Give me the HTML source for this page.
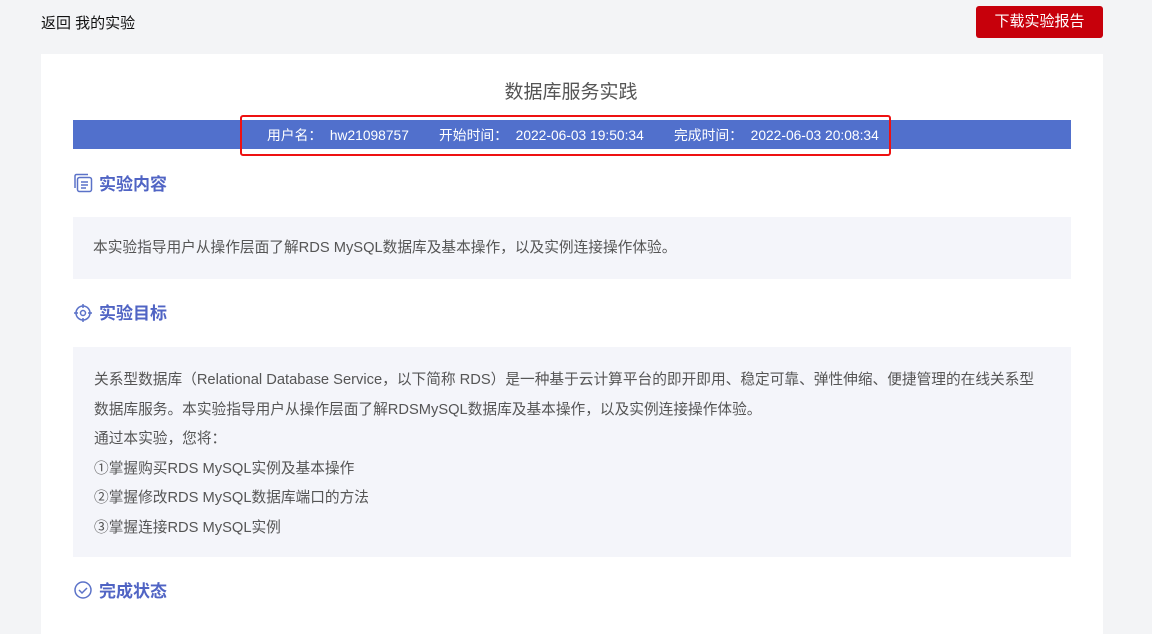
<!DOCTYPE html>
<html><head><meta charset="utf-8"><style>
*{margin:0;padding:0;box-sizing:border-box}
body{width:1152px;height:614px;overflow:hidden;background:#f3f4f6;font-family:"Liberation Sans","Noto Sans CJK SC",sans-serif;color:#333;position:relative}
.abs{position:absolute}
.back{left:41px;top:12px;font-size:15px;color:#111}
.btn{left:976px;top:6px;width:127px;height:32px;background:#c7000b;color:#fff;border-radius:3px;font-size:15px;text-align:center;line-height:32px}
.card{left:41px;top:54px;width:1062px;height:580px;background:#fff}
.title{left:0;width:1142px;top:77px;text-align:center;font-size:19px;color:#555}
.bar{left:73px;top:120px;width:998px;height:29px;background:#5170cc}
.red{left:240px;top:115px;width:651px;height:41px;border:2px solid #ee1111;border-radius:3px}
.info{top:124px;font-size:13.8px;color:#fff}
.h{left:99px;font-size:17px;font-weight:bold;color:#5064c4}
.box{left:73px;width:998px;background:#f4f5fa;font-size:14.7px;color:#555}
</style></head><body>
<div class="abs back">返回 我的实验</div>
<div class="abs btn">下载实验报告</div>
<div class="abs card"></div>
<div class="abs title">数据库服务实践</div>
<div class="abs bar"></div>
<div class="abs red"></div>
<div class="abs info" style="left:267px">用户名：&nbsp; hw21098757</div>
<div class="abs info" style="left:439px">开始时间：&nbsp; 2022-06-03 19:50:34</div>
<div class="abs info" style="left:674px">完成时间：&nbsp; 2022-06-03 20:08:34</div>
<svg class="abs" style="left:73px;top:173px" width="20" height="20" viewBox="0 0 20 20" fill="none" stroke="#5b72c8" stroke-width="1.5"><path d="M2 15V3a1.5 1.5 0 0 1 1.5-1.5H15"/><rect x="4.5" y="4.5" width="14" height="14" rx="2"/><path d="M8 9h7M8 12h7M8 15h5"/></svg>
<div class="abs h" style="top:170px">实验内容</div>
<div class="abs box" style="top:217px;height:62px;padding:19px 0 0 20px">本实验指导用户从操作层面了解RDS MySQL数据库及基本操作，以及实例连接操作体验。</div>
<svg class="abs" style="left:73px;top:303px" width="20" height="20" viewBox="0 0 20 20" fill="none" stroke="#5b72c8" stroke-width="1.5"><circle cx="10" cy="10" r="7"/><circle cx="10" cy="10" r="2.5"/><path d="M10 1v4M10 15v4M1 10h4M15 10h4"/></svg>
<div class="abs h" style="top:299px">实验目标</div>
<div class="abs box" style="top:347px;height:210px;padding:19px 0 0 21px;line-height:29.5px">关系型数据库（Relational Database Service，以下简称 RDS）是一种基于云计算平台的即开即用、稳定可靠、弹性伸缩、便捷管理的在线关系型<br>数据库服务。本实验指导用户从操作层面了解RDSMySQL数据库及基本操作，以及实例连接操作体验。<br>通过本实验，您将：<br>①掌握购买RDS MySQL实例及基本操作<br>②掌握修改RDS MySQL数据库端口的方法<br>③掌握连接RDS MySQL实例</div>
<svg class="abs" style="left:73px;top:580px" width="20" height="20" viewBox="0 0 20 20" fill="none" stroke="#5b72c8" stroke-width="1.5"><circle cx="10" cy="10" r="8"/><path d="M6 10l3 3 5-5"/></svg>
<div class="abs h" style="top:577px">完成状态</div>
</body></html>
